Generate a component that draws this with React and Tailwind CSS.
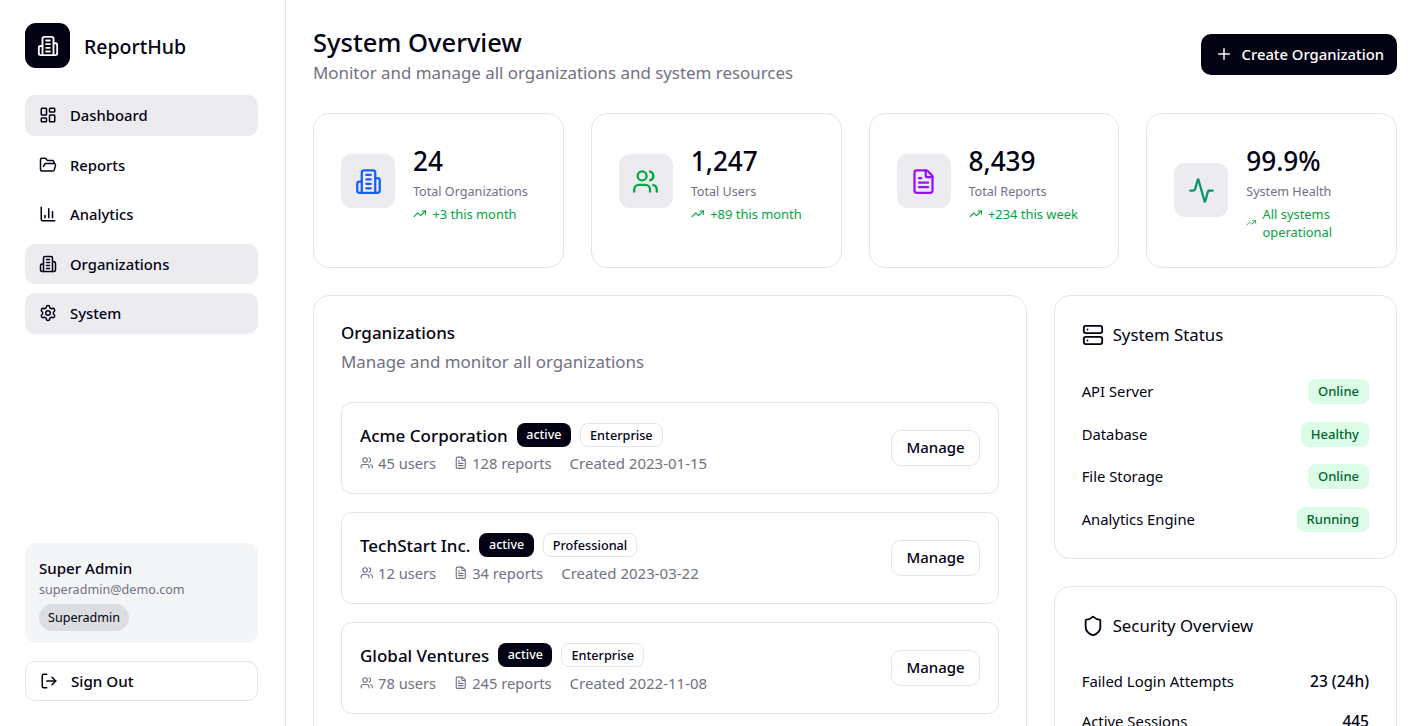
import React from 'react';
import {
  LayoutDashboard,
  FolderOpen,
  ChartColumn,
  Settings,
  LogOut,
  Plus,
  Users,
  FileText,
  Activity,
  TrendingUp,
  Server,
  Shield,
} from 'lucide-react';

// tower with side wings and four floor lines
const Building = ({ size = 24, className = '' }) => (
  <svg width={size} height={size} viewBox="0 0 24 24" fill="none" stroke="currentColor" strokeWidth="2" strokeLinecap="round" strokeLinejoin="round" className={className}>
    <path d="M6 22V4a2 2 0 0 1 2-2h8a2 2 0 0 1 2 2v18Z" />
    <path d="M6 12H4a2 2 0 0 0-2 2v6a2 2 0 0 0 2 2h2" />
    <path d="M18 9h2a2 2 0 0 1 2 2v9a2 2 0 0 1-2 2h-2" />
    <path d="M10 6h4" />
    <path d="M10 10h4" />
    <path d="M10 14h4" />
    <path d="M10 18h4" />
  </svg>
);

const navItems = [
  { label: 'Dashboard', icon: LayoutDashboard, active: true },
  { label: 'Reports', icon: FolderOpen, active: false },
  { label: 'Analytics', icon: ChartColumn, active: false },
  { label: 'Organizations', icon: Building, active: true },
  { label: 'System', icon: Settings, active: true },
];

const stats = [
  { value: '24', label: 'Total Organizations', note: '+3 this month', icon: Building, color: 'text-blue-600' },
  { value: '1,247', label: 'Total Users', note: '+89 this month', icon: Users, color: 'text-green-600' },
  { value: '8,439', label: 'Total Reports', note: '+234 this week', icon: FileText, color: 'text-purple-600' },
  { value: '99.9%', label: 'System Health', note: 'All systems operational', icon: Activity, color: 'text-emerald-600' },
];

const organizations = [
  { name: 'Acme Corporation', plan: 'Enterprise', users: 45, reports: 128, created: '2023-01-15' },
  { name: 'TechStart Inc.', plan: 'Professional', users: 12, reports: 34, created: '2023-03-22' },
  { name: 'Global Ventures', plan: 'Enterprise', users: 78, reports: 245, created: '2022-11-08' },
];

const services = [
  { name: 'API Server', status: 'Online' },
  { name: 'Database', status: 'Healthy' },
  { name: 'File Storage', status: 'Online' },
  { name: 'Analytics Engine', status: 'Running' },
];

const security = [
  { name: 'Failed Login Attempts', value: '23 (24h)' },
  { name: 'Active Sessions', value: '445' },
];

const Sidebar = () => (
  <aside className="w-[286px] h-full shrink-0 flex flex-col border-r border-[#e5e5e5] pl-[25px] pr-[27px] pt-[23px] pb-[25px]">
    <div className="flex items-center gap-[14px]">
      <div className="w-[45px] h-[45px] rounded-[11px] bg-[#030213] flex items-center justify-center text-white">
        <Building size={22} />
      </div>
      <span className="mt-[2px] text-[19.5px] font-medium text-[#030213]">ReportHub</span>
    </div>

    <nav className="mt-[27px] flex flex-col gap-[9px]">
      {navItems.map((item) => (
        <div
          key={item.label}
          className={`h-[40.5px] rounded-[10px] flex items-center gap-[13px] px-[14px] text-[14.8px] font-medium text-[#030213] ${item.active ? 'bg-[#ececf0]' : ''}`}
        >
          <item.icon size={18} strokeWidth={2} />
          <span>{item.label}</span>
        </div>
      ))}
    </nav>

    <div className="mt-auto rounded-[11px] bg-[#f4f5f7] h-[100px] px-[14px] pt-[13px]">
      <p className="text-[15.1px] leading-[24px] font-medium text-[#030213]">Super Admin</p>
      <p className="mt-[1px] text-[12.6px] leading-[18px] text-[#717182]">superadmin@demo.com</p>
      <span className="inline-block mt-[5px] h-[27px] rounded-full bg-[#dcdde0] px-[9px] text-[12.6px] leading-[27px] text-[#030213]">
        Superadmin
      </span>
    </div>

    <button className="mt-[18px] h-[40px] rounded-[10px] border border-[#e5e5e5] bg-white flex items-center gap-[13px] px-[14px] text-[15.2px] font-medium text-[#030213]">
      <LogOut size={18} strokeWidth={2} />
      <span>Sign Out</span>
    </button>
  </aside>
);

const StatCard = ({ stat }) => (
  <div className="h-[155px] rounded-[16px] border border-[#e5e5e5] bg-white px-[27px] pt-[27px]">
    <div className="flex items-center gap-[18px]">
      <div className="w-[54px] h-[54px] shrink-0 rounded-[11px] bg-[#ececf0] flex items-center justify-center">
        <stat.icon size={27} strokeWidth={2} className={stat.color} />
      </div>
      <div className="min-w-0 -mb-[2px]">
        <p className="text-[26.2px] leading-[40px] font-medium text-[#030213]">{stat.value}</p>
        <p className="text-[12.6px] leading-[21px] text-[#717182]">{stat.label}</p>
        <p className="mt-[3px] flex items-center gap-[6px] text-[12.9px] leading-[18px] text-green-600">
          <TrendingUp size={13.5} strokeWidth={2} />
          <span>{stat.note}</span>
        </p>
      </div>
    </div>
  </div>
);

const OrgRow = ({ org }) => (
  <div className="h-[92px] rounded-[11px] border border-[#e5e5e5] flex items-center justify-between px-[18px]">
    <div>
      <div className="flex items-center gap-[9px]">
        <span className="text-[17px] leading-[27px] font-medium text-[#030213]">{org.name}</span>
        <span className="h-[24px] rounded-[8px] bg-[#030213] px-[9.5px] text-[12.5px] leading-[24px] font-medium text-white">active</span>
        <span className="h-[24px] rounded-[8px] border border-[#e5e5e5] px-[9px] text-[12.7px] leading-[22px] font-medium text-[#030213]">{org.plan}</span>
      </div>
      <div className="mt-[2px] flex items-center gap-[18px] text-[14.7px] leading-[24px] text-[#717182]">
        <span className="flex items-center gap-[4.5px]"><Users size={13.5} strokeWidth={2} />{org.users} users</span>
        <span className="flex items-center gap-[4.5px]"><FileText size={13.5} strokeWidth={2} />{org.reports} reports</span>
        <span className="text-[15px]">Created {org.created}</span>
      </div>
    </div>
    <button className="h-[36px] rounded-[10px] border border-[#e5e5e5] bg-white px-[14px] pb-[2px] text-[15px] font-medium text-[#030213]">
      Manage
    </button>
  </div>
);

const App = () => {
  return (
    <div className="h-screen w-full flex overflow-hidden bg-white font-['Noto_Sans',sans-serif]">
      <Sidebar />

      <main className="flex-1 min-w-0 pl-[27px] pr-[20px] pt-[23px]">
        {/* Header */}
        <div className="flex items-start justify-between">
          <div>
            <h1 className="text-[25.5px] leading-[38px] font-medium text-[#030213]">System Overview</h1>
            <p className="mt-[2px] text-[16.9px] leading-[20px] text-[#717182]">Monitor and manage all organizations and system resources</p>
          </div>
          <button className="mt-[11px] h-[41px] rounded-[10px] bg-[#030213] flex items-center gap-[9px] pl-[14px] pr-[13px] pb-[1px] text-[14.8px] font-medium text-white">
            <Plus size={18} strokeWidth={2} />
            <span>Create Organization</span>
          </button>
        </div>

        {/* Stats */}
        <div className="mt-[30px] grid grid-cols-4 gap-[27px]">
          {stats.map((stat) => (
            <StatCard key={stat.label} stat={stat} />
          ))}
        </div>

        <div className="mt-[27px] grid grid-cols-3 gap-[27px]">
          {/* Organizations */}
          <section className="col-span-2 rounded-[16px] border border-[#e5e5e5] bg-white px-[27px] pt-[27px] pb-[27px]">
            <h2 className="text-[17px] leading-[20px] font-medium text-[#030213]">Organizations</h2>
            <p className="mt-[5px] text-[16.9px] leading-[27px] text-[#717182]">Manage and monitor all organizations</p>
            <div className="mt-[27px] flex flex-col gap-[18px]">
              {organizations.map((org) => (
                <OrgRow key={org.name} org={org} />
              ))}
            </div>
          </section>

          {/* Right column */}
          <div className="flex flex-col gap-[27px]">
            <section className="h-[264px] rounded-[16px] border border-[#e5e5e5] bg-white px-[27px] pt-[25px]">
              <h2 className="flex items-center gap-[9px] text-[16.8px] leading-[27px] text-[#030213]">
                <Server size={22} strokeWidth={2} />
                System Status
              </h2>
              <div className="mt-[31px] flex flex-col gap-[17.5px]">
                {services.map((service) => (
                  <div key={service.name} className="flex items-center justify-between h-[25px]">
                    <span className="text-[14.8px] text-[#030213]">{service.name}</span>
                    <span className="h-[25px] rounded-[8px] bg-green-100 px-[10px] text-[13px] leading-[25px] font-medium text-green-800">{service.status}</span>
                  </div>
                ))}
              </div>
            </section>

            <section className="rounded-[16px] border border-[#e5e5e5] bg-white px-[27px] pt-[25px] pb-[27px]">
              <h2 className="flex items-center gap-[9px] text-[16.8px] leading-[27px] text-[#030213]">
                <Shield size={22} strokeWidth={2} />
                Security Overview
              </h2>
              <div className="mt-[30px] flex flex-col gap-[15.5px]">
                {security.map((row) => (
                  <div key={row.name} className="flex items-baseline justify-between h-[24px] leading-[24px]">
                    <span className="text-[14.9px] text-[#030213]">{row.name}</span>
                    <span className="text-[15.5px] font-medium text-[#030213]">{row.value}</span>
                  </div>
                ))}
              </div>
            </section>
          </div>
        </div>
      </main>
    </div>
  );
};

export default App;
